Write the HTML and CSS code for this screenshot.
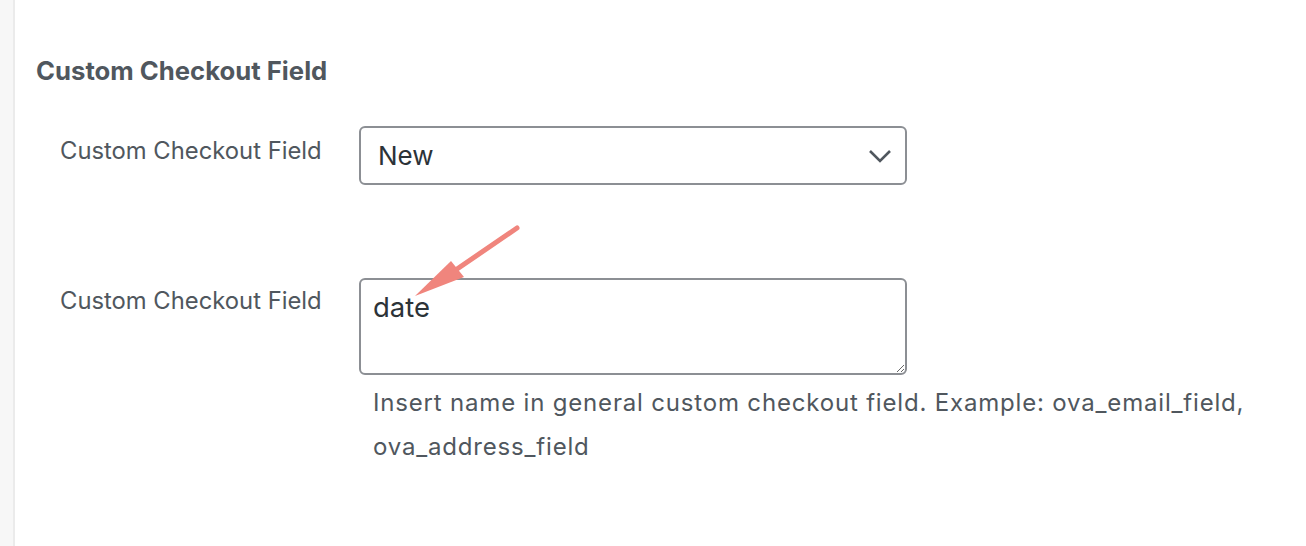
FILE: index.html
```html
<!DOCTYPE html>
<html lang="en">
<head>
<meta charset="utf-8">
<title>Custom Checkout Field</title>
<link rel="stylesheet" href="styles.css">
</head>
<body>
<div class="page">
  <div class="sidebar"></div>
  <main class="content">
    <h2 class="section-title">Custom Checkout Field</h2>
    <div class="form">
      <div class="row row-select">
        <div class="label">Custom Checkout Field</div>
        <div class="field">
          <div class="select-wrap">
            <select class="select">
              <option>New</option>
            </select>
            <svg class="chevron" width="24" height="14" viewBox="0 0 24 14"><path d="M2 2 L12 12 L22 2" fill="none" stroke="#50575e" stroke-width="2.6"/></svg>
          </div>
        </div>
      </div>
      <div class="row row-textarea">
        <div class="label">Custom Checkout Field</div>
        <div class="field">
          <div class="textarea-wrap">
            <textarea class="textarea">date</textarea>
            <svg class="arrow" width="130" height="90" viewBox="0 0 130 90"><line x1="118" y1="10" x2="42" y2="62" stroke="#f0857d" stroke-width="5" stroke-linecap="round"/><polygon points="16,78 52,43 65,59" fill="#f0857d"/></svg>
          </div>
          <p class="description">Insert name in general custom checkout field. Example: ova_email_field, ova_address_field</p>
        </div>
      </div>
    </div>
  </main>
</div>
</body>
</html>
```
FILE: styles.css
```css
html, body {
  margin: 0;
  padding: 0;
  background: #fff;
}
body {
  font-family: Inter, "Liberation Sans", sans-serif;
  color: #3c434a;
}
.page {
  display: flex;
  min-height: 546px;
}
.sidebar {
  width: 13px;
  background: #f7f7f7;
  border-right: 2px solid #ebebeb;
  flex: none;
}
.content {
  flex: 1;
  padding-left: 21px;
  padding-top: 53px;
}
.section-title {
  margin: 0;
  font-size: 25.7px;
  line-height: 36px;
  font-weight: 700;
  color: #50575e;
}
.form {
  padding-left: 24px;
  margin-top: 37px;
}
.row {
  display: flex;
}
.label {
  width: 299px;
  flex: none;
  font-size: 23.8px;
  line-height: 30px;
  color: #50575e;
}
.row-select .label {
  padding-top: 10px;
}
.row-textarea {
  margin-top: 93px;
}
.row-textarea .label {
  padding-top: 8px;
}
.select-wrap {
  position: relative;
  width: 548px;
}
.select {
  appearance: none;
  -webkit-appearance: none;
  display: block;
  width: 548px;
  height: 59px;
  box-sizing: border-box;
  border: 2px solid #8c8f94;
  border-radius: 6px;
  background: #fff;
  padding: 0 17px;
  font-family: Inter, "Liberation Sans", sans-serif;
  font-size: 26px;
  color: #2c3338;
  outline: none;
}
.chevron {
  position: absolute;
  right: 15px;
  top: 23px;
}
.textarea-wrap {
  position: relative;
  width: 548px;
}
.textarea {
  display: block;
  width: 548px;
  height: 97px;
  box-sizing: border-box;
  border: 2px solid #8c8f94;
  border-radius: 6px;
  padding: 9px 12px;
  font-family: Inter, "Liberation Sans", sans-serif;
  font-size: 27.5px;
  line-height: 36px;
  color: #2c3338;
  outline: none;
}
.arrow {
  position: absolute;
  left: 40px;
  top: -60px;
}
.description {
  margin: 6px 0 0 14px;
  font-size: 24px;
  letter-spacing: 0.82px;
  line-height: 44px;
  color: #50575e;
  width: 890px;
}
```
